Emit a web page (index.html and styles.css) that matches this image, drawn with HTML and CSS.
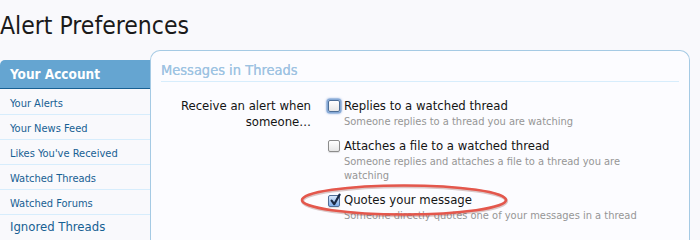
FILE: index.html
```html
<!DOCTYPE html>
<html lang="en">
<head>
<meta charset="utf-8">
<title>Alert Preferences</title>
<link rel="stylesheet" href="styles.css">
</head>
<body>
<h1 class="title">Alert Preferences</h1>
<div class="main">
  <aside class="sidebar">
    <h3 class="side-head">Your Account</h3>
    <ul class="side-list">
      <li><a href="#">Your Alerts</a></li>
      <li><a href="#">Your News Feed</a></li>
      <li><a href="#">Likes You've Received</a></li>
      <li><a href="#">Watched Threads</a></li>
      <li><a href="#">Watched Forums</a></li>
    </ul>
    <h4 class="side-sub">Ignored Threads</h4>
  </aside>
  <section class="panel">
    <h2 class="section-head">Messages in Threads</h2>
    <div class="form-row">
      <div class="row-label">Receive an alert when someone…</div>
      <ul class="options">
        <li>
          <label class="opt"><span class="cb focus"></span>Replies to a watched thread</label>
          <p class="hint">Someone replies to a thread you are watching</p>
        </li>
        <li>
          <label class="opt"><span class="cb"></span>Attaches a file to a watched thread</label>
          <p class="hint">Someone replies and attaches a file to a thread you are watching</p>
        </li>
        <li>
          <label class="opt"><span class="cb checked"><svg viewBox="0 0 12 14" width="12" height="14"><path d="M2.6 7.6 L5.2 11.2 L10.6 1.6" fill="none" stroke="#1b2a44" stroke-width="2.2" stroke-linecap="round" stroke-linejoin="round"/></svg></span>Quotes your message</label>
          <p class="hint">Someone directly quotes one of your messages in a thread</p>
        </li>
      </ul>
    </div>
  </section>
</div>
<svg class="annot" width="216" height="38" viewBox="0 0 216 38">
  <ellipse cx="106" cy="18" rx="102" ry="14.5" fill="none" stroke="rgba(120,40,30,0.25)" stroke-width="3.5" transform="translate(0.5 1)"/>
  <ellipse cx="106" cy="18" rx="102" ry="14.5" fill="none" stroke="#e4574c" stroke-width="2.6"/>
</svg>
</body>
</html>
```

FILE: styles.css
```css
html, body {
  margin: 0;
  padding: 0;
  background: #f9f9fc;
  height: 100%;
  overflow: hidden;
}

body {
  font-family: "DejaVu Sans Condensed", "DejaVu Sans", sans-serif;
  color: #141414;
  position: relative;
}

.title {
  margin: 0;
  padding-top: 12px;
  height: 50px;
  box-sizing: border-box;
  font-size: 24.5px;
  font-weight: normal;
  line-height: 28px;
  color: #1a1a1a;
}

.main {
  display: flex;
  align-items: flex-start;
}

.sidebar {
  width: 150px;
  flex: none;
  margin-top: 10px;
}

.side-head {
  margin: 0;
  height: 28px;
  line-height: 28px;
  padding-left: 10px;
  background: #65a5d1;
  border-bottom: 1px solid #176093;
  border-top-left-radius: 5px;
  color: #fff;
  font-size: 13.5px;
  font-weight: bold;
}

.side-list {
  list-style: none;
  margin: 0;
  padding: 1px 0 0;
}

.side-list li {
  height: 24px;
  line-height: 24px;
  border-bottom: 1px solid #d7edfc;
  padding-left: 10px;
}

.side-list a {
  color: #176093;
  font-size: 11px;
  text-decoration: none;
}

.side-sub {
  margin: 0;
  padding-left: 10px;
  line-height: 24px;
  font-size: 13px;
  font-weight: normal;
  color: #176093;
}

.panel {
  flex: 1;
  margin-right: 10px;
  min-height: 400px;
  background: #fcfcff;
  border: 1px solid #a5cae4;
  border-bottom: none;
  border-radius: 10px 10px 0 0;
  padding: 10px 10px 0;
}

.section-head {
  margin: 0;
  font-size: 14.5px;
  font-weight: normal;
  line-height: 18px;
  padding-bottom: 2px;
  color: #9ec3e2;
  border-bottom: 1px solid #d7edfc;
  text-shadow: 0 0 0.5px #9ec3e2;
}

.form-row {
  display: flex;
  align-items: flex-start;
  margin-top: 16px;
}

.row-label {
  width: 150px;
  flex: none;
  text-align: right;
  font-size: 13px;
  line-height: 16px;
  color: #141414;
}

.options {
  list-style: none;
  margin: 0 0 0 17px;
  padding: 0;
  width: 316px;
}

.options li {
  margin-bottom: 9px;
}

.opt {
  display: flex;
  align-items: flex-start;
  font-size: 13px;
  line-height: 16px;
  color: #141414;
}

.cb {
  position: relative;
  flex: none;
  width: 10px;
  height: 10px;
  margin: 2px 4px 0 0;
  border: 1px solid #8c8c8c;
  border-radius: 2px;
  background: linear-gradient(#ffffff, #e6e6e6);
  box-shadow: 0 1px 1px rgba(0, 0, 0, 0.12);
}

.cb.focus {
  border-color: #4d6e97;
  box-shadow: 0 0 0 1.5px #86a9d6, 0 0 2px 2px rgba(110, 150, 210, 0.55);
}

.cb.checked {
  margin-top: 3px;
  border-color: #4f6d96;
  background: linear-gradient(#d8e8fb, #7fadea);
}

.cb.checked svg {
  position: absolute;
  left: 0;
  top: -3px;
}

.hint {
  margin: 1px 0 0 16px;
  font-size: 11px;
  line-height: 14px;
  color: #969696;
}

.annot {
  position: absolute;
  left: 298px;
  top: 182px;
}
```
